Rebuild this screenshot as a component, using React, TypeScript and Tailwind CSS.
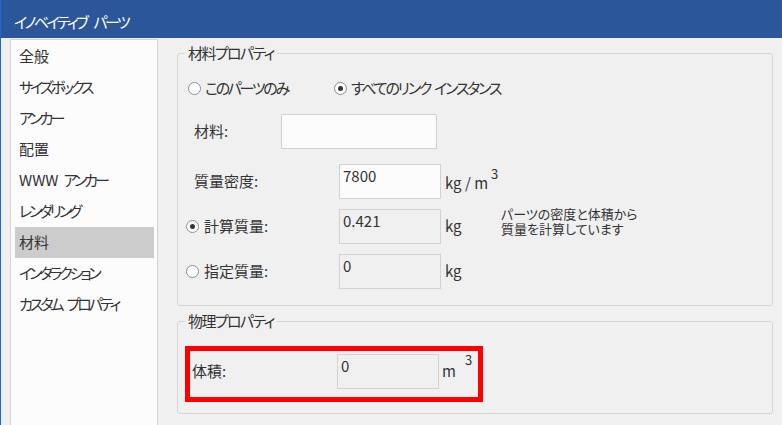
import React from "react";

// words are set apart by a fixed gap so the tracking doesn't eat the space,
// and plain latin words keep their normal spacing
const Words = ({ text, track, gap = "gap-[5px]" }: { text: string; track?: string; gap?: string }) => (
  <span className={`inline-flex ${gap}`}>
    {text.split(" ").map((w, i) => (
      <span key={i} className={/[^\x00-\x7f]/.test(w) ? track : ""}>
        {w}
      </span>
    ))}
  </span>
);

const menu: { label: string; track?: string }[] = [
  { label: "全般" },
  { label: "サイズボックス", track: "tracking-[-3px]" },
  { label: "アンカー", track: "tracking-[-3px]" },
  { label: "配置" },
  { label: "WWW アンカー", track: "tracking-[-3px]" },
  { label: "レンダリング", track: "tracking-[-3.2px]" },
  { label: "材料" },
  { label: "インタラクション", track: "tracking-[-3.1px]" },
  { label: "カスタム プロパティ", track: "tracking-[-3px]" },
];

const Radio = ({ checked }: { checked?: boolean }) => (
  <span className="flex h-[13px] w-[13px] shrink-0 items-center justify-center rounded-full border border-[#8f8f8f] bg-white">
    {checked && <span className="h-[5px] w-[5px] rounded-full bg-[#333]" />}
  </span>
);

const Box = ({ value, w, off }: { value?: string; w: string; off?: boolean }) => (
  <div
    className={`h-[35px] shrink-0 border border-[#d2d2d2] px-[3px] pt-[2px] leading-[18px] ${w} ${
      off ? "bg-[#f0f0f0]" : "bg-[#fcfcfc]"
    }`}
  >
    {value}
  </div>
);

const Group = ({ title, className, children }: { title: string; className?: string; children: React.ReactNode }) => (
  <fieldset className={`rounded-[3px] border border-[#d5d5d5] ${className ?? ""}`}>
    <legend className="ml-[7px] h-[18px] px-[3px] leading-[18px] tracking-[-1.6px]">{title}</legend>
    {children}
  </fieldset>
);

export default function App() {
  return (
    <div className="flex h-[425px] w-[782px] flex-col overflow-hidden border-l border-[#1b68d1] bg-[#f0f0f0] font-['Noto_Sans_CJK_JP',sans-serif] text-[15px] text-[#333] [font-feature-settings:'palt']">
      {/* title bar */}
      <div className="flex h-[38px] shrink-0 items-center bg-[#2b579a] pl-[13px] pt-[6px] text-white">
        <Words text="イノベイティブ パーツ" track="tracking-[-2.6px]" gap="gap-[7px]" />
      </div>

      <div className="flex min-h-0 flex-1">
        {/* category list */}
        <ul className="ml-[9px] mt-[1px] w-[148px] shrink-0 border-x border-t border-[#d4d4d4] bg-[#fcfcfc] pt-[1px]">
          {menu.map((m) => (
            <li
              key={m.label}
              className={`ml-[4px] mr-[3px] flex h-[31px] items-center pl-[4px] ${
                m.label === "材料" ? "bg-[#cccccc]" : ""
              }`}
            >
              <Words text={m.label} track={m.track} />
            </li>
          ))}
        </ul>

        <div className="ml-[19px] w-[596px] shrink-0 pt-[6px]">
          <Group title="材料プロパティ" className="pb-[16px]">
            <div className="mt-[16px] flex h-[20px] items-center pl-[10px]">
              <div className="flex w-[146px] items-center">
                <Radio />
                <span className="ml-[4px] tracking-[-2.3px]">このパーツのみ</span>
              </div>
              <Radio checked />
              <span className="ml-[4px]">
                <Words text="すべてのリンク インスタンス" track="tracking-[-2.2px]" gap="gap-[4px]" />
              </span>
            </div>

            <div className="mt-[16px] flex h-[35px] items-center">
              <span className="w-[103px] shrink-0 pl-[16px]">材料:</span>
              <Box w="w-[156px]" />
            </div>

            <div className="mt-[15px] flex h-[35px] items-center">
              <span className="w-[161px] shrink-0 pl-[16px]">質量密度:</span>
              <Box w="w-[102px]" value="7800" />
              <span className="ml-[4px] mt-[3px]">kg / m</span>
              <span className="ml-[3px] mt-[3px] self-start text-[13px] leading-[13px]">3</span>
            </div>

            <div className="mt-[10px] flex h-[35px] items-center">
              <div className="flex w-[161px] shrink-0 items-center pl-[8px]">
                <Radio checked />
                <span className="ml-[5px]">計算質量:</span>
              </div>
              <Box w="w-[102px]" value="0.421" off />
              <span className="ml-[4px] w-[56px] shrink-0">kg</span>
              <div className="mb-[12px] flex flex-col text-[13px] leading-[15px]">
                <span>パーツの密度と体積から</span>
                <span>質量を計算しています</span>
              </div>
            </div>

            <div className="mt-[10px] flex h-[35px] items-center">
              <div className="flex w-[161px] shrink-0 items-center pl-[8px]">
                <Radio />
                <span className="ml-[5px]">指定質量:</span>
              </div>
              <Box w="w-[102px]" value="0" off />
              <span className="ml-[4px]">kg</span>
            </div>
          </Group>

          <Group title="物理プロパティ" className="mt-[6px] pb-[11px]">
            <div className="ml-[7px] mt-[16px] h-[56px] w-[298px] border-[5px] border-[#ff0000] pt-[3px]">
              <div className="flex h-[35px] items-center">
                <span className="w-[147px] shrink-0 pl-[2px]">体積:</span>
                <Box w="w-[102px]" value="0" off />
                <span className="ml-[3px]">m</span>
                <span className="ml-[9px] -mt-[1px] self-start text-[13px] leading-[13px]">3</span>
              </div>
            </div>
          </Group>
        </div>
      </div>
    </div>
  );
}
